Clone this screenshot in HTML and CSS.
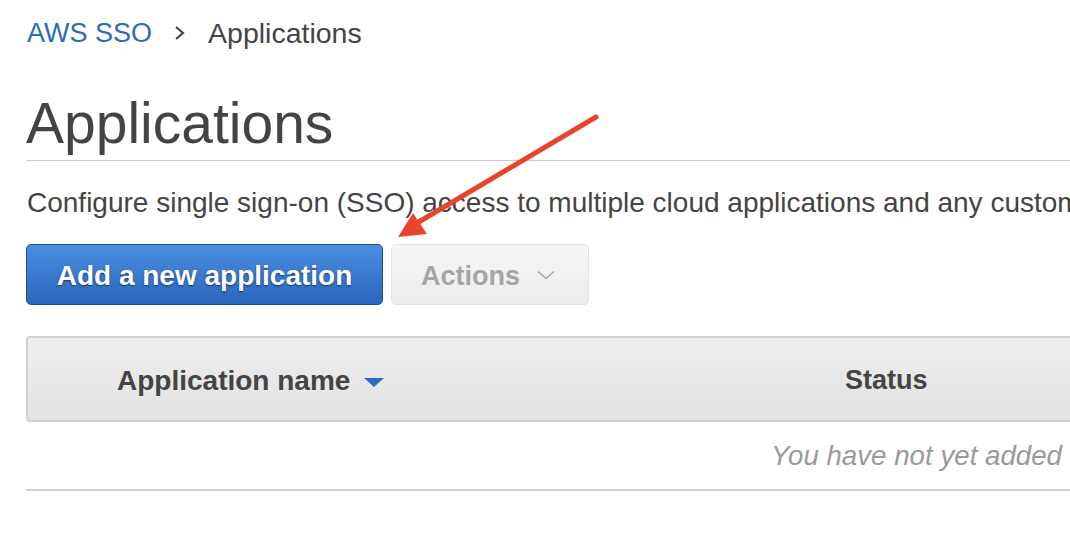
FILE: index.html
```html
<!DOCTYPE html>
<html lang="en">
<head>
<meta charset="utf-8">
<title>Applications - AWS SSO</title>
<link rel="stylesheet" href="styles.css">
</head>
<body>
<div class="page">
  <nav class="crumbs">
    <a class="crumb-link" href="#">AWS SSO</a>
    <svg class="crumb-sep" width="12" height="16" viewBox="0 0 12 16"><path d="M2 2 L9 8 L2 14" fill="none" stroke="#444" stroke-width="2.2"/></svg>
    <span class="crumb-current">Applications</span>
  </nav>
  <h1 class="title">Applications</h1>
  <p class="desc">Configure single sign-on (SSO) access to multiple cloud applications and any custom SAML 2.0 applications.</p>
  <div class="toolbar">
    <button class="btn btn-primary">Add a new application</button>
    <button class="btn btn-actions">Actions
      <svg class="caret" width="20" height="12" viewBox="0 0 20 12"><path d="M2 2.5 L10 9.5 L18 2.5" fill="none" stroke="#a8a8a8" stroke-width="1.6"/></svg>
    </button>
  </div>
  <table class="grid">
    <thead>
      <tr>
        <th class="col-sel"></th>
        <th class="col-name">Application name <span class="sort-tri"></span></th>
        <th class="col-status">Status</th>
      </tr>
    </thead>
    <tbody>
      <tr><td class="empty" colspan="3">You have not yet added any applications.</td></tr>
    </tbody>
  </table>
</div>
<svg class="arrow" width="1070" height="546" viewBox="0 0 1070 546">
  <line x1="596" y1="117" x2="412" y2="226" stroke="#e8432b" stroke-width="5" stroke-linecap="round"/>
  <polygon points="398,237 413,213 427,234" fill="#e8432b"/>
</svg>
</body>
</html>
```
FILE: styles.css
```css
html, body {
  margin: 0;
  padding: 0;
  background: #fff;
  overflow: hidden;
}
body {
  width: 1070px;
  height: 546px;
  position: relative;
  font-family: "Liberation Sans", Arial, Helvetica, sans-serif;
  color: #444;
}
.page {
  width: 2100px;
  padding-left: 26px;
}
.crumbs {
  display: flex;
  align-items: center;
  height: 34px;
  padding-top: 16px;
  font-size: 27px;
}
.crumb-link {
  color: #2a6bbd;
  text-decoration: none;
  margin-left: 1px;
}
.crumb-sep {
  margin: 0 22px 0 22px;
}
.crumb-current {
  color: #444;
  font-size: 28.5px;
}
.title {
  margin: 0;
  padding-top: 33px;
  font-size: 57px;
  font-weight: normal;
  line-height: 80px;
  color: #444;
  border-bottom: 1px solid #ccc;
  height: 77px;
}
.desc {
  margin: 0;
  padding-top: 24px;
  font-size: 28px;
  line-height: 36px;
  color: #444;
  white-space: nowrap;
  padding-left: 1px;
}
.toolbar {
  display: flex;
  gap: 8px;
  margin-top: 23px;
}
.btn {
  font-family: "Liberation Sans", Arial, Helvetica, sans-serif;
  font-weight: bold;
  font-size: 28px;
  height: 61px;
  border-radius: 5px;
  padding: 3px 0 0 0;
  display: flex;
  align-items: center;
}
.btn-primary {
  width: 357px;
  justify-content: center;
  color: #fff;
  background: linear-gradient(#4a8fe3, #2a65bc);
  border: 1px solid #1f4c8e;
  text-shadow: 0 1px 2px rgba(0, 0, 0, 0.55);
}
.btn-actions {
  width: 198px;
  padding-left: 29px;
  font-size: 27px;
  color: #a5a5a5;
  background: linear-gradient(#f6f6f6, #ececec);
  border: 1px solid #e2e2e2;
}
.caret {
  margin-left: 16px;
  margin-top: -2px;
}
.grid {
  margin-top: 31px;
  width: 1995px;
  border-collapse: separate;
  border-spacing: 0;
}
.grid th {
  height: 79px;
  padding: 3px 0 0 0;
  text-align: left;
  font-size: 28px;
  font-weight: bold;
  color: #444;
  background: linear-gradient(#eeeeee, #e2e2e2);
  border-top: 2px solid #d2d2d2;
  border-bottom: 2px solid #d2d2d2;
}
.grid th.col-sel {
  width: 89px;
  border-left: 2px solid #d2d2d2;
  border-top-left-radius: 4px;
  border-bottom-left-radius: 4px;
}
.grid th.col-name {
  width: 728px;
}
.grid th.col-status {
  font-size: 27px;
}
.sort-tri {
  display: inline-block;
  width: 0;
  height: 0;
  margin-left: 6px;
  vertical-align: middle;
  border-left: 10.5px solid transparent;
  border-right: 10.5px solid transparent;
  border-top: 9px solid #2c6cc5;
}
.grid td.empty {
  height: 67px;
  padding: 0;
  text-align: center;
  font-size: 27.7px;
  font-style: italic;
  color: #9a9a9a;
  border-bottom: 2px solid #d2d2d2;
}
.arrow {
  position: absolute;
  left: 0;
  top: 0;
  pointer-events: none;
}
```
